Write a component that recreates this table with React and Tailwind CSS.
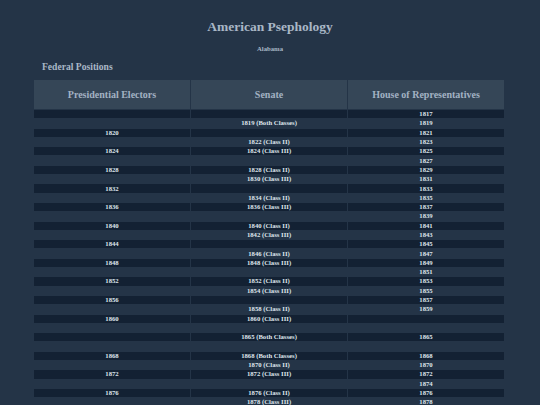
import React from 'react';

const rows = [
  ['', '', '1817'],
  ['', '1819 (Both Classes)', '1819'],
  ['1820', '', '1821'],
  ['', '1822 (Class II)', '1823'],
  ['1824', '1824 (Class III)', '1825'],
  ['', '', '1827'],
  ['1828', '1828 (Class II)', '1829'],
  ['', '1830 (Class III)', '1831'],
  ['1832', '', '1833'],
  ['', '1834 (Class II)', '1835'],
  ['1836', '1836 (Class III)', '1837'],
  ['', '', '1839'],
  ['1840', '1840 (Class II)', '1841'],
  ['', '1842 (Class III)', '1843'],
  ['1844', '', '1845'],
  ['', '1846 (Class II)', '1847'],
  ['1848', '1848 (Class III)', '1849'],
  ['', '', '1851'],
  ['1852', '1852 (Class II)', '1853'],
  ['', '1854 (Class III)', '1855'],
  ['1856', '', '1857'],
  ['', '1858 (Class II)', '1859'],
  ['1860', '1860 (Class III)', ''],
  ['', '', ''],
  ['', '1865 (Both Classes)', '1865'],
  ['', '', ''],
  ['1868', '1868 (Both Classes)', '1868'],
  ['', '1870 (Class II)', '1870'],
  ['1872', '1872 (Class III)', '1872'],
  ['', '', '1874'],
  ['1876', '1876 (Class II)', '1876'],
  ['', '1878 (Class III)', '1878'],
];

const App = () => {
  return (
    <div className="min-h-screen bg-[#243447] [font-family:'Liberation_Serif',serif] font-bold">
      <div className="pt-[18px] text-center text-[13.5px] leading-[18px] text-[#a9b7c6]">American Psephology</div>
      <div className="pt-[9px] text-center text-[6.7px] leading-[8px] text-[#a9b7c6]">Alabama</div>
      <div className="pl-[42px] pt-[7px] text-[9.6px] leading-[13px] text-[#a9b7c6]">Federal Positions</div>
      <div className="px-[34px] pt-[6px]">
        <table className="w-full table-fixed border-separate border-spacing-[1px] -mx-[1px]">
          <thead>
            <tr>
              <th className="h-[29px] bg-[#354657] text-[10px] font-bold text-[#a3b2c3]">Presidential Electors</th>
              <th className="h-[29px] bg-[#354657] text-[10px] font-bold text-[#a3b2c3]">Senate</th>
              <th className="h-[29px] bg-[#354657] text-[10px] font-bold text-[#a3b2c3]">House of Representatives</th>
            </tr>
          </thead>
          <tbody>
            {rows.map((row, idx) => (
              <tr key={idx}>
                {row.map((cell, i) => (
                  <td key={i} className={`h-[8.3px] p-0 text-center text-[6.7px] leading-[8px] text-[#dfe5ec] ${idx % 2 === 0 ? 'bg-[#132133]' : 'bg-[#243447]'}`}>
                    {cell}
                  </td>
                ))}
              </tr>
            ))}
          </tbody>
        </table>
      </div>
    </div>
  );
};

export default App;
